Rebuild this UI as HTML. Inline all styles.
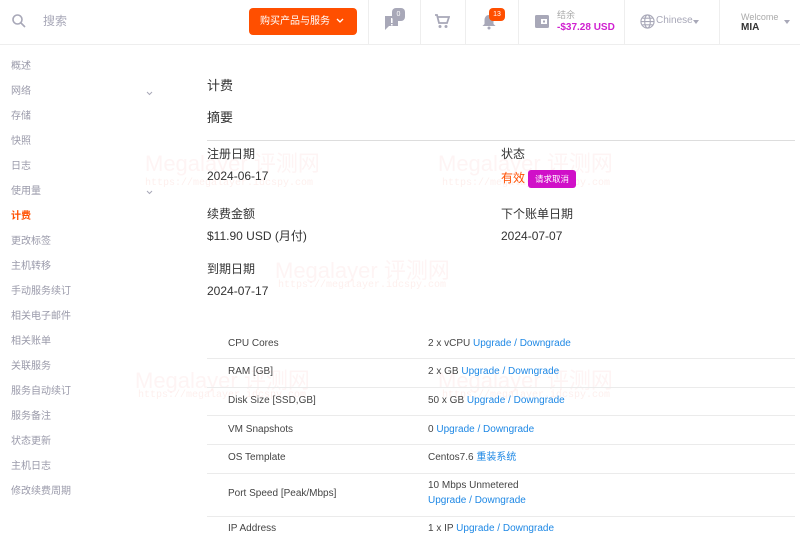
<!DOCTYPE html>
<html><head><meta charset="utf-8"><style>
*{margin:0;padding:0;box-sizing:border-box}
body{width:800px;height:543px;overflow:hidden;background:#fff;font-family:"Liberation Sans","Noto Sans CJK SC",sans-serif;color:#333;position:relative}
.a{position:absolute;white-space:nowrap;line-height:1.2}
.hdr{position:absolute;left:0;top:0;width:800px;height:45px;border-bottom:1px solid #eee}
.vl{position:absolute;top:0;width:1px;height:45px;background:#eee}
.side{font-size:10px;color:#9a9aaa}
.lbl{font-size:12px;color:#333}
.val{font-size:12px;color:#333}
.row{position:absolute;left:207px;width:588px;border-top:1px solid #ebebeb}
.t{font-size:10px;color:#444;line-height:12px}
.lk{color:#1e88e5}
.wm{position:absolute;color:rgba(240,120,110,.08);font-size:22px;white-space:nowrap}
.wu{position:absolute;color:rgba(240,120,110,.12);font-family:"Liberation Mono",monospace;font-size:10px;white-space:nowrap}
</style></head><body>
<div class="hdr"></div>
<svg class="a" style="left:11px;top:13px" width="16" height="16" viewBox="0 0 16 16"><circle cx="6.5" cy="6.5" r="4.5" fill="none" stroke="#a8a8b8" stroke-width="1.6"/><path d="M10 10l4 4" stroke="#a8a8b8" stroke-width="1.6"/></svg>
<div class="a" style="left:43px;top:14px;font-size:12px;color:#a8a8b8">搜索</div>
<div class="a" style="left:249px;top:8px;width:108px;height:27px;background:#ff4f00;border-radius:4px;color:#fff;font-size:10px;line-height:27px;padding-left:11px">购买产品与服务</div>
<svg class="a" style="left:336px;top:18px" width="8" height="6" viewBox="0 0 8 6"><path d="M1 1l3 3 3-3" fill="none" stroke="#fff" stroke-width="1.3"/></svg>
<div class="vl" style="left:368px"></div><div class="vl" style="left:420px"></div><div class="vl" style="left:465px"></div><div class="vl" style="left:518px"></div><div class="vl" style="left:624px"></div><div class="vl" style="left:719px"></div>
<svg class="a" style="left:384px;top:15px" width="16" height="16" viewBox="0 0 16 16"><path d="M1 1h13v10H5l-4 4z" fill="#a8a8b8"/><rect x="7" y="3" width="1.6" height="5" fill="#fff"/><rect x="7" y="9" width="1.6" height="1.5" fill="#fff"/></svg>
<div class="a" style="left:392px;top:8px;width:13px;height:13px;border-radius:4px;background:#a8a8b8;color:#fff;font-size:7px;text-align:center;line-height:13px">0</div>
<svg class="a" style="left:434px;top:14px" width="16" height="15" viewBox="0 0 16 15"><path d="M1 1h2l2 8h8l2-6H4" fill="none" stroke="#a8a8b8" stroke-width="1.8"/><circle cx="6" cy="12.5" r="1.5" fill="#a8a8b8"/><circle cx="12" cy="12.5" r="1.5" fill="#a8a8b8"/></svg>
<svg class="a" style="left:482px;top:14px" width="14" height="16" viewBox="0 0 14 16"><path d="M7 1c3 0 4.5 2.5 4.5 5v4l2 2H.5l2-2V6C2.5 3.5 4 1 7 1z" fill="#a8a8b8"/><circle cx="7" cy="14" r="1.5" fill="#a8a8b8"/></svg>
<div class="a" style="left:489px;top:8px;width:16px;height:13px;border-radius:4px;background:#ff4f00;color:#fff;font-size:7px;text-align:center;line-height:13px">13</div>
<svg class="a" style="left:535px;top:15px" width="14" height="13" viewBox="0 0 14 13"><rect x="0" y="0" width="14" height="13" rx="1.5" fill="#a8a8b8"/><rect x="6" y="4" width="6" height="5" fill="#fff"/><rect x="8" y="5.5" width="2" height="2" fill="#a8a8b8"/></svg>
<div class="a" style="left:557px;top:10px;font-size:9px;color:#aaa">结余</div>
<div class="a" style="left:557px;top:22px;font-size:10px;font-weight:bold;color:#d020d0">-$37.28 USD</div>
<svg class="a" style="left:640px;top:14px" width="15" height="15" viewBox="0 0 16 16" fill="none" stroke="#a8a8b8" stroke-width="1.2"><circle cx="8" cy="8" r="7"/><ellipse cx="8" cy="8" rx="3" ry="7"/><path d="M1 8h14M2.5 4.5h11M2.5 11.5h11"/></svg>
<div class="a" style="left:656px;top:15px;font-size:10px;color:#a8a8b8">Chinese</div>
<div class="a" style="left:693px;top:20px;border:3.5px solid transparent;border-top:4px solid #a8a8b8"></div>
<div class="a" style="left:741px;top:12px;font-size:9px;color:#aaa">Welcome</div>
<div class="a" style="left:741px;top:22px;font-size:10px;font-weight:bold;color:#333">MIA</div>
<div class="a" style="left:784px;top:20px;border:3.5px solid transparent;border-top:4px solid #a8a8b8"></div>

<div class="side">
<div class="a" style="left:11px;top:61px">概述</div>
<div class="a" style="left:11px;top:86px">网络</div>
<div class="a" style="left:11px;top:111px">存储</div>
<div class="a" style="left:11px;top:136px">快照</div>
<div class="a" style="left:11px;top:161px">日志</div>
<div class="a" style="left:11px;top:186px">使用量</div>
<div class="a" style="left:11px;top:211px;color:#ff4f00;font-weight:bold">计费</div>
<div class="a" style="left:11px;top:236px">更改标签</div>
<div class="a" style="left:11px;top:261px">主机转移</div>
<div class="a" style="left:11px;top:286px">手动服务续订</div>
<div class="a" style="left:11px;top:311px">相关电子邮件</div>
<div class="a" style="left:11px;top:336px">相关账单</div>
<div class="a" style="left:11px;top:361px">关联服务</div>
<div class="a" style="left:11px;top:386px">服务自动续订</div>
<div class="a" style="left:11px;top:411px">服务备注</div>
<div class="a" style="left:11px;top:436px">状态更新</div>
<div class="a" style="left:11px;top:461px">主机日志</div>
<div class="a" style="left:11px;top:486px">修改续费周期</div>
</div>
<svg class="a" style="left:146px;top:91px" width="7" height="5" viewBox="0 0 7 5"><path d="M1 1l2.5 2.5L6 1" fill="none" stroke="#a8a8b8"/></svg>
<svg class="a" style="left:146px;top:190px" width="7" height="5" viewBox="0 0 7 5"><path d="M1 1l2.5 2.5L6 1" fill="none" stroke="#a8a8b8"/></svg>

<div class="wm" style="left:145px;top:146px">Megalayer 评测网</div><div class="wu" style="left:145px;top:178px">https://megalayer.idcspy.com</div>
<div class="wm" style="left:438px;top:146px">Megalayer 评测网</div><div class="wu" style="left:442px;top:178px">https://megalayer.idcspy.com</div>
<div class="wm" style="left:275px;top:253px">Megalayer 评测网</div><div class="wu" style="left:278px;top:280px">https://megalayer.idcspy.com</div>
<div class="wm" style="left:135px;top:363px">Megalayer 评测网</div><div class="wu" style="left:138px;top:390px">https://megalayer.idcspy.com</div>
<div class="wm" style="left:438px;top:363px">Megalayer 评测网</div><div class="wu" style="left:442px;top:390px">https://megalayer.idcspy.com</div>

<div class="a" style="left:207px;top:78px;font-size:13px">计费</div>
<div class="a" style="left:207px;top:110px;font-size:13px">摘要</div>
<div class="a" style="left:207px;top:140px;width:588px;border-top:1px solid #ddd"></div>
<div class="a lbl" style="left:207px;top:147px">注册日期</div>
<div class="a val" style="left:207px;top:169px">2024-06-17</div>
<div class="a lbl" style="left:501px;top:147px">状态</div>
<div class="a" style="left:501px;top:171px;font-size:12px;color:#ff4f00">有效</div>
<div class="a" style="left:528px;top:170px;width:48px;height:18px;background:#d010c8;border-radius:3px;color:#fff;font-size:8.5px;line-height:18px;text-align:center">请求取消</div>
<div class="a lbl" style="left:207px;top:207px">续费金额</div>
<div class="a val" style="left:207px;top:229px">$11.90 USD (月付)</div>
<div class="a lbl" style="left:501px;top:207px">下个账单日期</div>
<div class="a val" style="left:501px;top:229px">2024-07-07</div>
<div class="a lbl" style="left:207px;top:262px">到期日期</div>
<div class="a val" style="left:207px;top:284px">2024-07-17</div>

<div class="row" style="top:358px"></div><div class="row" style="top:387px"></div><div class="row" style="top:415px"></div><div class="row" style="top:444px"></div><div class="row" style="top:473px"></div><div class="row" style="top:516px"></div>
<div class="a t" style="left:228px;top:338px">CPU Cores</div><div class="a t" style="left:428px;top:338px">2 x vCPU <span class="lk">Upgrade / Downgrade</span></div>
<div class="a t" style="left:228px;top:366px">RAM [GB]</div><div class="a t" style="left:428px;top:366px">2 x GB <span class="lk">Upgrade / Downgrade</span></div>
<div class="a t" style="left:228px;top:395px">Disk Size [SSD,GB]</div><div class="a t" style="left:428px;top:395px">50 x GB <span class="lk">Upgrade / Downgrade</span></div>
<div class="a t" style="left:228px;top:424px">VM Snapshots</div><div class="a t" style="left:428px;top:424px">0 <span class="lk">Upgrade / Downgrade</span></div>
<div class="a t" style="left:228px;top:452px">OS Template</div><div class="a t" style="left:428px;top:452px">Centos7.6 <span class="lk">重装系统</span></div>
<div class="a t" style="left:228px;top:488px">Port Speed [Peak/Mbps]</div><div class="a t" style="left:428px;top:480px">10 Mbps Unmetered</div><div class="a t lk" style="left:428px;top:495px">Upgrade / Downgrade</div>
<div class="a t" style="left:228px;top:523px">IP Address</div><div class="a t" style="left:428px;top:523px">1 x IP <span class="lk">Upgrade / Downgrade</span></div>
</body></html>
